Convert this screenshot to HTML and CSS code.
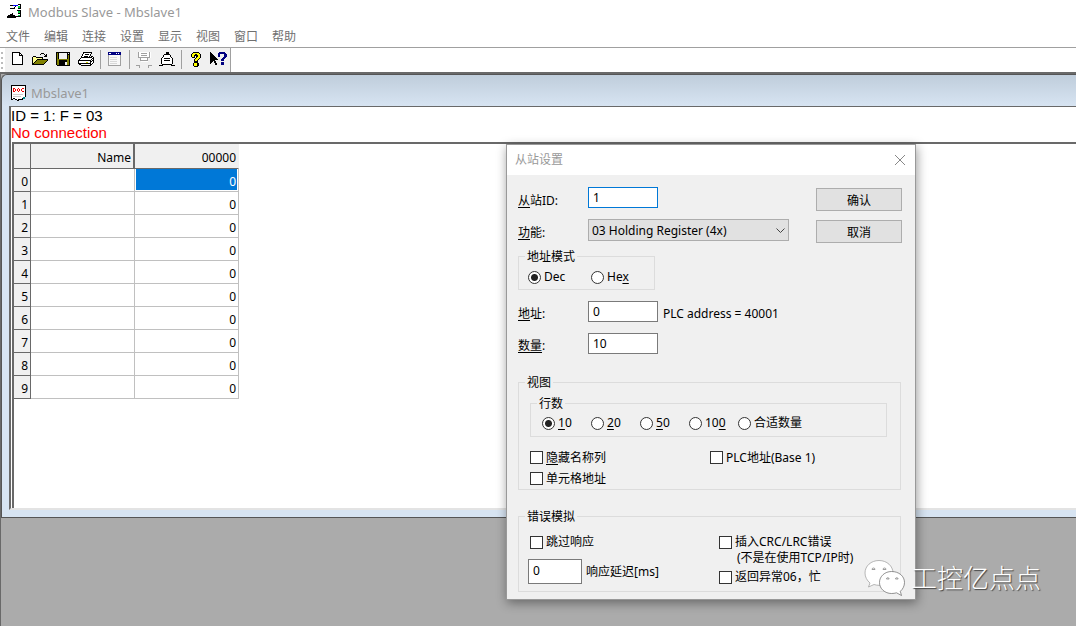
FILE: index.html
```html
<!DOCTYPE html>
<html lang="zh-CN">
<head>
<meta charset="utf-8">
<title>Modbus Slave - Mbslave1</title>
<link rel="stylesheet" href="styles.css">
</head>
<body class="app">
<header class="titlebar">
  <svg class="app-icon" width="16" height="16" viewBox="0 0 16 16" shape-rendering="crispEdges">
    <path fill="#000" d="M3 1h3v1H3zM8 2h1v1H8zM3 4h5v1H3zM7 3h1v1H7zM11 0h3v1h-3zM13 1h1v3h-1zM11 4h3v1h-3zM10 6h4v1h-4zM13 7h1v6h-1zM11 9h2v1h-2zM9 12h5v1H9zM0 12h1v-1h2v-1h2V9h1v2h2v1h1v2H0z"/>
    <path fill="#00f" d="M6 1h5v1H6z"/><path fill="#0c4" d="M11 2h2v2h-2zM11 7h2v2h-2zM11 11h2v1h-2z"/>
  </svg>
  <span class="title-text">Modbus Slave - Mbslave1</span>
</header>
<nav class="menubar">
  <button class="menu" type="button">文件</button>
  <button class="menu" type="button">编辑</button>
  <button class="menu" type="button">连接</button>
  <button class="menu" type="button">设置</button>
  <button class="menu" type="button">显示</button>
  <button class="menu" type="button">视图</button>
  <button class="menu" type="button">窗口</button>
  <button class="menu" type="button">帮助</button>
</nav>
<div class="toolbar-row">
  <div class="toolbar">
    <button class="tool" type="button" aria-label="New">
      <svg width="16" height="16" viewBox="0 0 16 16" shape-rendering="crispEdges"><path fill="#fff" stroke="#000" d="M3.500.5h7l3 3v9h-10z"/><path fill="none" stroke="#000" d="M10.500.5v3h3"/></svg>
    </button>
    <button class="tool" type="button" aria-label="Open">
      <svg width="16" height="16" viewBox="0 0 16 16" shape-rendering="crispEdges"><path fill="#ffff90" d="M1 5h3v1h6v2H5l-4 5z"/><path fill="#000" d="M1 4h3v1H1zM0 5h1v8H0zM4 5h6v1H4zM10 5h1v3h-1zM9 1h3v1H9zM8 2h1v1H8zM12 2h1v1h-1zM14 2h1v3h-1zM13 3h1v2h-1zM12 4h1v1h-1z"/><path fill="#808000" d="M5 8h10v1h-1v1h-1v1h-1v1H1v-1h1v-1h1V9h1z"/><path fill="#000" d="M5 7h11v1H5zM4 8h1v1H4zM3 9h1v1H3zM2 10h1v1H2zM1 11h1v1H1zM15 8h1v1h-1zM14 9h1v1h-1zM13 10h1v1h-1zM12 11h1v1h-1zM0 12h12v1H0z"/></svg>
    </button>
    <button class="tool" type="button" aria-label="Save">
      <svg width="16" height="16" viewBox="0 0 16 16" shape-rendering="crispEdges"><path fill="#000" d="M1 0h14v14H2v-1H1z"/><path fill="#808000" d="M2 1h1v12H2zM13 3h1v10h-1zM3 7h10v1H3zM3 8h1v5H3zM12 8h1v5h-1z"/><path fill="#f0f0f0" d="M4 1h8v6H4zM13 1h1v1h-1zM10 10h2v3h-2z"/></svg>
    </button>
    <button class="tool" type="button" aria-label="Print">
      <svg width="16" height="16" viewBox="0 0 16 16" shape-rendering="crispEdges"><path fill="#fff" stroke="#000" d="M5.500.5h8l-2 5h-8z"/><path fill="#000" d="M7 2h4v1H7zM6 4h4v1H6z"/><path fill="#fff" stroke="#000" d="M.5 8.500l3-3h9l2-1 1 1v5l-3 3h-9l-3-2z"/><path fill="#000" d="M1 8h11v1H1zM1 11h11v1H1zM12 8h1v5h-1zM13 7h1v1h-1zM14 6h1v1h-1zM13 9h1v1h-1zM14 8h1v1h-1z"/><path fill="#d0d000" d="M8 10h2v1H8z"/></svg>
    </button>
    <span class="sep"></span>
    <button class="tool" type="button" aria-label="Definition">
      <svg width="16" height="16" viewBox="0 0 16 16" shape-rendering="crispEdges"><path fill="#f8f8f8" stroke="#a0a0a0" d="M1.500.5h12v13h-12z"/><path fill="#000080" d="M1 0h13v3H1z"/><path fill="#fff" d="M2 1h2v1H2zM9 1h1v1H9zM11 1h1v1h-1z"/><path fill="#d8d8d8" d="M3 5h7v1H3zM3 7h7v1H3zM3 9h7v1H3zM3 11h7v1H3z"/></svg>
    </button>
    <span class="sep"></span>
    <button class="tool" type="button" aria-label="Connect" disabled>
      <svg width="16" height="16" viewBox="0 0 16 16" shape-rendering="crispEdges"><path fill="#fff" d="M3 0h12v6H3zM5 6h7v4H5z"/><path fill="none" stroke="#a0a0a0" d="M2.500 0v5.500h11V0M5 1.500h6M5 3.500h6M4.500 6v2.500h7V6M0 13.500h3.500v2M15.500 13.500h-3v2"/></svg>
    </button>
    <button class="tool" type="button" aria-label="Disconnect">
      <svg width="16" height="16" viewBox="0 0 16 16" shape-rendering="crispEdges"><path fill="#000" d="M7 0h3v3H7zM5 2h6v1H5zM4 3h1v2H4zM11 3h1v2h-1zM3 5h1v1H3zM12 5h1v1h-1zM2 6h1v6H2zM13 6h1v6h-1zM3 12h10v1H3zM0 13h4v1H0zM12 13h4v1h-4z"/><path fill="#fff" d="M5 3h6v2h1v1h1v6H3V6h1V5h1z"/><path fill="#000" d="M5 6h6v1H5zM5 8h6v1H5z"/></svg>
    </button>
    <span class="sep"></span>
    <button class="tool" type="button" aria-label="Help">
      <svg width="16" height="16" viewBox="0 0 16 16" shape-rendering="crispEdges"><path fill="#000" d="M5 0h6v1h1v1h1v4h-1v1h-1v1h-1v2H6V7h1V6h1V4H7v2H4V5H3V2h1V1h1zM6 10h4v1h1v3h-1v1H6v-1H5v-3h1z"/><path fill="#ff0" d="M5 1h6v1h1v4h-1v1h-1v1H9v1H7V7h1V6h1V5h1V3H9V2H7v1H6v2H4V2h1zM6 11h3v3H6z"/></svg>
    </button>
    <button class="tool" type="button" aria-label="Context help">
      <svg width="17" height="16" viewBox="0 0 17 16" shape-rendering="crispEdges"><path fill="#000" d="M0 0h1v1h1v1h1v1h1v1h1v1h1v1h1v1h1v1H5v1h1v2h1v2H5v-2H4V9H3v1H2v1H1v1H0z"/><path fill="#000080" d="M9 0h6v1h1v1h1v3h-1v1h-1v1h-1v2h-3V7h1V6h1V5h1V2h-4v3H8V1h1zM11 10h3v3h-3z"/></svg>
    </button>
  </div>
</div>
<main class="workspace">
  <section class="child">
    <header class="child-title">
      <svg width="16" height="17" viewBox="0 0 16 17" shape-rendering="crispEdges"><path fill="#fff" stroke="#000" d="M1.500.5h14v11l-2 2-2 1h-2l-2 1-3-2-3 1z"/><path fill="#e00" d="M3 3h2v1H3zM3 3h1v4H3zM3 6h2v1H3zM5 4h1v2H5zM8 3h1v1H8zM7 4h1v2H7zM9 4h1v2H9zM8 6h1v1H8zM12 3h2v1h-2zM11 4h1v2h-1zM12 6h2v1h-2z"/><path fill="#ccc" d="M3 9h10v1H3zM3 11h8v1H3z"/><path fill="#088" d="M13 12h2v2h-2z"/></svg>
      <span class="title-text">Mbslave1</span>
    </header>
    <div class="client">
      <div class="status">ID = 1: F = 03</div>
      <div class="status error">No connection</div>
      <div class="grid-area">
        <table class="grid">
          <thead><tr><th class="idx"></th><th class="name">Name</th><th class="val">00000</th></tr></thead>
          <tbody>
            <tr><th>0</th><td></td><td class="selected">0</td></tr>
            <tr><th>1</th><td></td><td>0</td></tr>
            <tr><th>2</th><td></td><td>0</td></tr>
            <tr><th>3</th><td></td><td>0</td></tr>
            <tr><th>4</th><td></td><td>0</td></tr>
            <tr><th>5</th><td></td><td>0</td></tr>
            <tr><th>6</th><td></td><td>0</td></tr>
            <tr><th>7</th><td></td><td>0</td></tr>
            <tr><th>8</th><td></td><td>0</td></tr>
            <tr><th>9</th><td></td><td>0</td></tr>
          </tbody>
        </table>
      </div>
    </div>
  </section>
</main>

<form class="dialog" role="dialog" aria-labelledby="dlg-title">
  <header class="dialog-title">
    <span id="dlg-title">从站设置</span>
    <button class="close" type="button" aria-label="Close"><svg width="12" height="12" viewBox="0 0 12 12"><path stroke="#888" d="M1 1l10 10M11 1L1 11"/></svg></button>
  </header>
  <div class="dialog-body">
    <div class="fields fields-top">
      <label for="slave-id"><u>从</u>站ID:</label>
      <input class="text focused" id="slave-id" type="text" value="1">
      <button class="push" type="button">确认</button>
      <label for="func"><u>功</u>能:</label>
      <span class="select-wrap"><select id="func"><option>03 Holding Register (4x)</option></select><svg class="chevron" width="9" height="6" viewBox="0 0 9 6"><path fill="none" stroke="#444" d="M.5.5l4 4 4-4"/></svg></span>
      <button class="push" type="button">取消</button>
    </div>
    <fieldset class="mode">
      <legend>地址模式</legend>
      <div class="radios">
        <label class="opt mode-opt"><input type="radio" name="mode" checked>Dec</label>
        <label class="opt"><input type="radio" name="mode"><span>He<u>x</u></span></label>
      </div>
    </fieldset>
    <div class="fields fields-addr">
      <label for="addr"><u>地</u>址:</label>
      <input class="text" id="addr" type="text" value="0">
      <span>PLC address = 40001</span>
      <label for="qty"><u>数量</u>:</label>
      <input class="text" id="qty" type="text" value="10">
    </div>
    <fieldset class="view">
      <legend>视图</legend>
      <fieldset class="rows">
        <legend>行数</legend>
        <div class="radios">
          <label class="opt row-opt"><input type="radio" name="rows" checked><span><u>1</u>0</span></label>
          <label class="opt row-opt"><input type="radio" name="rows"><span><u>2</u>0</span></label>
          <label class="opt row-opt"><input type="radio" name="rows"><span><u>5</u>0</span></label>
          <label class="opt row-opt"><input type="radio" name="rows"><span>10<u>0</u></span></label>
          <label class="opt"><input type="radio" name="rows">合适数量</label>
        </div>
      </fieldset>
      <div class="view-checks">
        <label class="opt"><input type="checkbox"><span><u>隐</u>藏名称列</span></label>
        <label class="opt"><input type="checkbox">PLC地址(Base 1)</label>
        <label class="opt"><input type="checkbox">单元格地址</label>
      </div>
    </fieldset>
    <fieldset class="errors">
      <legend>错误模拟</legend>
      <div class="error-cols">
        <div class="error-left">
          <label class="opt"><input type="checkbox">跳过响应</label>
          <div class="delay"><input class="text" id="delay" type="text" value="0"><label for="delay">响应延迟[ms]</label></div>
        </div>
        <div class="error-right">
          <label class="opt"><input type="checkbox" id="crc">插入CRC/LRC错误</label>
          <label class="note" for="crc">(不是在使用TCP/IP时)</label>
          <label class="opt"><input type="checkbox">返回异常06，忙</label>
        </div>
      </div>
    </fieldset>
  </div>
</form>

<div class="watermark">
  <svg width="42" height="38" viewBox="0 0 42 38">
    <g fill="#fff" stroke="#999" stroke-width=".7"><path d="M15 1.500C7 1.500 1 7 1 14c0 4 2 7.500 5 10L4.500 28l5.500-2.500c1.600.5 3.300.8 5 .8 8 0 14-5.500 14-12.300S23 1.500 15 1.500z"/><path stroke="#666" d="M27.500 12.500C21 12.500 15.500 17.200 15.500 23.500S21 34.500 27.500 34.500c1.600 0 3.500-.2 5-.7l5 2.700-1.200-4.200c2.500-2 4.200-5.300 4.200-8.800 0-6.300-5.500-11-13-11z"/></g>
    <g fill="#fff" stroke="#888" stroke-width=".8"><path d="M8 10.500a1.500 1.500 0 1 1 3 0zM19 10.500a1.500 1.500 0 1 1 3 0zM22.500 20a1.300 1.300 0 1 1 2.600 0zM31.500 20a1.300 1.300 0 1 1 2.600 0z"/></g>
  </svg>
  <span>工控亿点点</span>
</div>
</body>
</html>
```
FILE: styles.css
```css
* { box-sizing: border-box; }

.app {
  margin: 0;
  min-height: 100vh;
  display: flex;
  flex-direction: column;
  position: relative;
  overflow: hidden;
  background: #fff;
  color: #000;
  font: 12px/16px "Noto Sans", "Noto Sans CJK SC", sans-serif;
}

button, input, select { font: inherit; color: inherit; border-radius: 0; }
button { border: 0; background: none; padding: 0; }
u { text-underline-offset: 2px; }

/* Main window */
.titlebar { display: flex; align-items: center; gap: 5px; height: 24px; padding-left: 7px; }
.title-text { color: #999; font-size: 13px; }
.menubar { display: flex; gap: 14px; height: 23px; padding-left: 6px; }
.menu { color: #707070; height: 26px; }

.toolbar-row { border-top: 1px solid #a0a0a0; height: 25px; display: flex; padding-left: 1px; }
.toolbar-row::before { content: ""; width: 2px; margin: 4px 2px 0 0; background: repeating-linear-gradient(#bbb 0 2px, #fff 2px 5px); }
.toolbar { display: flex; background: #f0f0f0; border-right: 1px solid #a0a0a0; }
.tool { width: 23px; display: flex; align-items: center; justify-content: center; }
.sep { width: 1px; margin: 2px 2px 3px 3px; background: #a0a0a0; }

.workspace { flex: 1; background: #ababab; border-top: 2px solid #696969; border-left: 1px solid #696969; }

/* Child document window */
.child { background: #d7e4f2; border: 1px solid #555; border-width: 1px 0 1px 1px; border-top-left-radius: 6px; padding: 0 0 7px 7px; background-image: linear-gradient(#bfcddb, #d7e4f2 31px); }
.child-title { display: flex; align-items: center; gap: 5px; height: 31px; padding: 5px 0 0 1px; }
.client { background: #fff; border: solid #696969; border-width: 1px 0 0 2px; border-bottom: 2px solid #e3e3e3; }
.status { font: 15px/17px "Liberation Sans", Arial, sans-serif; }
.error { color: #f00; }
.grid-area { min-height: 366px; margin: 1px 0 0 1px; border: solid #696969; border-width: 2px 0 0 2px; }
.grid { border-collapse: separate; border-spacing: 0; table-layout: fixed; width: 225px; font-size: 12px; }
.grid th, .grid td { height: 23px; padding: 4px 2px 0; text-align: right; font-weight: normal; line-height: 16px; border: solid #c0c0c0; border-width: 0 1px 1px 0; }
.grid th { background: #f0f0f0; border-color: #696969; }
.grid thead th { height: 25px; }
.grid thead .idx { width: 17px; }
.grid thead .name { width: 104px; border-right-width: 2px; }
.grid thead .val { border-right-color: #f0f0f0; }
.grid .selected { background: #0078d7; color: #fff; box-shadow: inset -1px -1px 0 #fff, inset 1px 0 0 #fff; }

/* Slave settings dialog */
.dialog { position: absolute; left: 506px; top: 144px; width: 410px; background: #f0f0f0; border: 1px solid #999; box-shadow: 1px 3px 10px rgba(0, 0, 0, .4); }
.dialog-title { display: flex; align-items: center; justify-content: space-between; height: 30px; padding: 0 9px 0 8px; background: #fff; color: #999; }
.close { display: flex; }
.dialog-body { padding: 12px 14px 7px 11px; }
.fields { display: grid; align-items: center; }
.fields-top { grid-template-columns: 70px 1fr 86px; grid-template-rows: 24px 24px; row-gap: 8px; margin-right: -1px; }
.fields-top > label { align-self: end; line-height: 20px; }
.fields-addr { grid-template-columns: 70px 70px 1fr; row-gap: 11px; margin-top: 11px; }
.fields-addr > span { padding: 4px 0 0 5px; line-height: 17px; }
.fields-addr > label { padding-top: 4px; line-height: 17px; }

.text { width: 70px; height: 21px; padding: 0 4px; background: #fff; border: 1px solid #7a7a7a; outline: 0; align-self: start; }
.focused { border-color: #0078d7; }
.push { height: 23px; padding-top: 2px; background: #e1e1e1; border: 1px solid #adadad; align-self: end; }
.select-wrap { width: 201px; height: 22px; position: relative; align-self: start; }
.select-wrap select { appearance: none; width: 100%; height: 22px; padding: 1px 3px 0; background: #e1e1e1; border: 1px solid #adadad; }
.chevron { position: absolute; right: 4px; top: 9px; pointer-events: none; }

fieldset { border: 1px solid #dcdcdc; margin: 0; padding: 0; min-width: 0; }
legend { margin-left: 6px; padding: 1px 2px 0; line-height: 16px; }
.mode { width: 137px; margin-top: 5px; }
.radios { display: flex; align-items: center; height: 24px; padding-left: 9px; }
.opt { display: flex; align-items: center; gap: 3px; white-space: nowrap; }
.mode-opt { width: 63px; }
.row-opt { width: 49px; }
.opt input { appearance: none; flex: none; width: 13px; height: 13px; margin: 0; background: #fff; border: 1px solid #333; }
.opt input[type="radio"] { border-radius: 50%; }
.opt input[type="radio"]:checked { background: radial-gradient(circle, #222 0 3px, #fff 4px); }

.view { margin-top: 20px; }
.rows { margin: 4px 13px 0 11px; }
.rows .radios { padding: 0 0 2px 11px; }
.view-checks { display: grid; grid-template-columns: 180px 1fr; grid-auto-rows: 21px; padding: 10px 0 0 11px; }
.errors { margin-top: 18px; }
.error-cols { display: grid; grid-template-columns: 189px 1fr; padding: 9px 0 6px 11px; }
.delay { display: flex; align-items: center; gap: 4px; margin: 9px 0 0 -2px; }
.delay .text { width: 54px; height: 25px; padding-bottom: 3px; }
.note { display: block; padding-left: 18px; white-space: nowrap; }
.error-right .note + .opt { margin-top: 3px; }

/* Channel watermark */
.watermark { position: absolute; left: 864px; top: 559px; display: flex; align-items: center; gap: 5px; color: #fff; font-size: 26px; font-weight: 300; line-height: 38px; white-space: nowrap; text-shadow: 1px 1px 1px #444; pointer-events: none; }
```
